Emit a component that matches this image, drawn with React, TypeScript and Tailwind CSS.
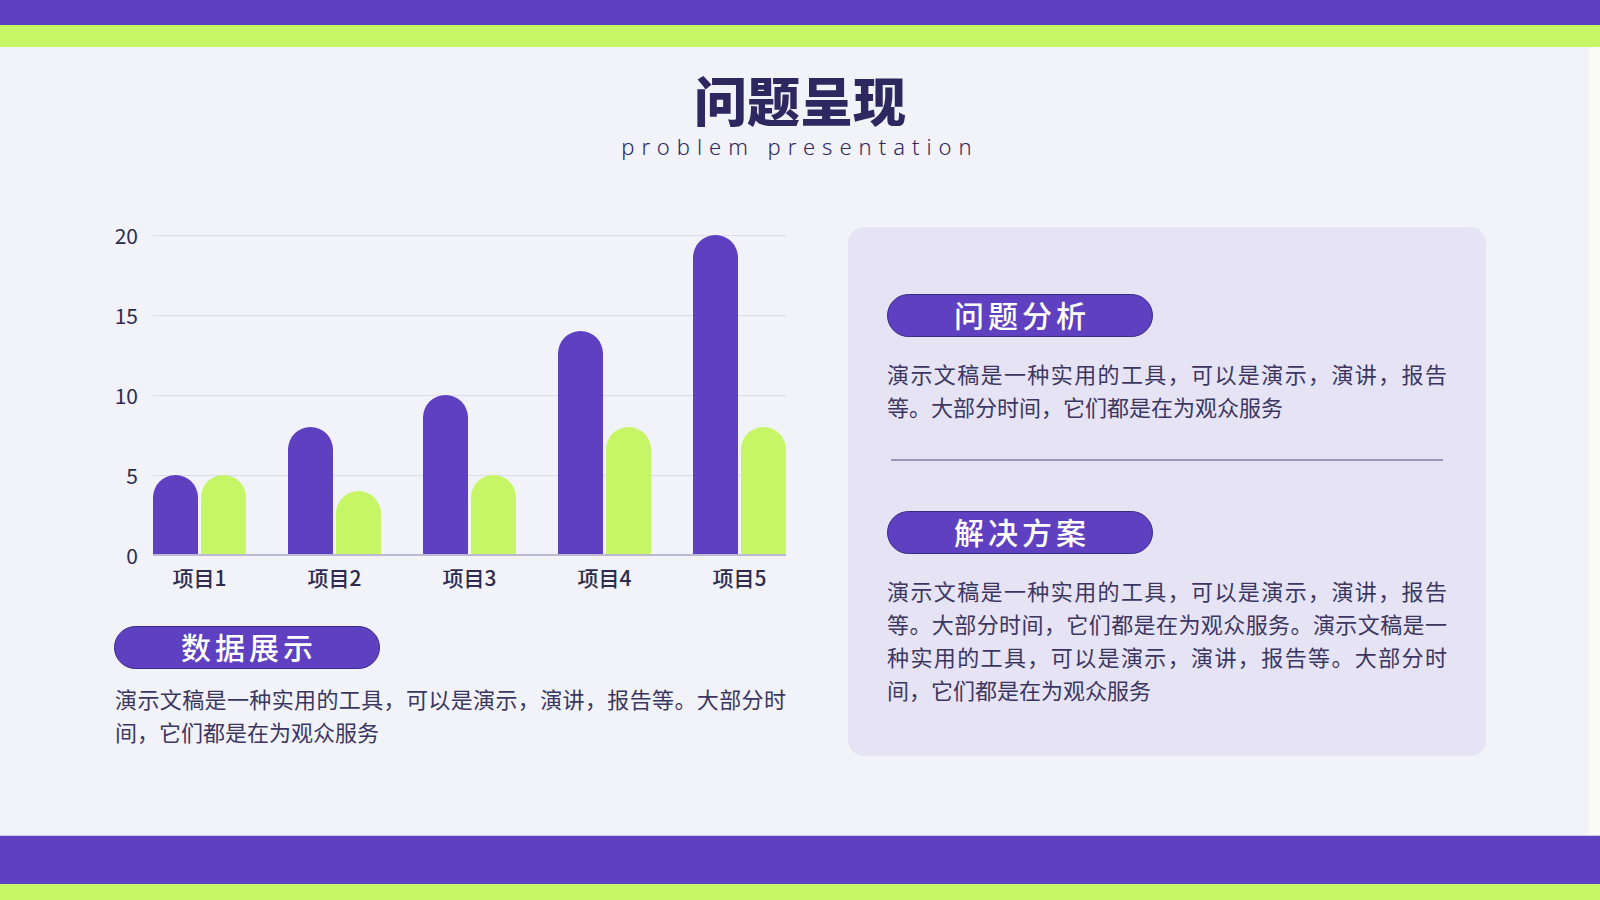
const data = [
  { name: '项目1', a: 5, b: 5 },
  { name: '项目2', a: 8, b: 4 },
  { name: '项目3', a: 10, b: 5 },
  { name: '项目4', a: 14, b: 8 },
  { name: '项目5', a: 20, b: 8 },
];

const cjk = "font-['Noto_Sans_CJK_SC','Noto_Sans',sans-serif]";
const unit = 16; // px per value unit

function Pill({ label }: { label: string }) {
  return (
    <div className="flex h-[43px] w-[266px] items-center justify-center rounded-full border border-[#3a2a8a] bg-[#5e40c1] pb-[3px] pl-[4px] text-[30px] font-medium leading-none tracking-[4px] text-white">
      {label}
    </div>
  );
}

const copy = '演示文稿是一种实用的工具，可以是演示，演讲，报告等。大部分时间，它们都是在为观众服务';

export default function App() {
  return (
    <div className={`flex h-[900px] w-[1600px] flex-col overflow-hidden bg-[#f1f3f8] ${cjk}`}>
      {/* top bands */}
      <div className="h-[25px] bg-[#5e40c1]" />
      <div className="h-[22px] bg-[#c6f566]" />

      <main className="flex flex-1 flex-col border-r-[11px] border-[#fbfaf4]">
        {/* title */}
        <div className="flex flex-col items-center pt-[26px] pl-[11px]">
          <h1 className="text-[53px] font-black leading-none text-[#2e2760]">问题呈现</h1>
          <p className="mt-[9px] font-['Noto_Sans',sans-serif] text-[22px] font-light leading-none tracking-[7px] text-[#2e2760]">
            problem presentation
          </p>
        </div>

        <div className="mt-[66px] flex items-start pl-[112px]">
          {/* left column */}
          <div className="flex w-[675px] flex-col">
            <div className="flex gap-[15px]">
              <div className="flex h-[344px] w-[26px] flex-col justify-between text-right text-[21px] leading-[24px] text-[#2e2b4f]">
                <span>20</span>
                <span>15</span>
                <span>10</span>
                <span>5</span>
                <span>0</span>
              </div>
              <div className="mt-[12px] flex flex-col">
                <div className="relative h-[320px] w-[633px]">
                  <div className="absolute left-0 right-0 top-0 h-px bg-[#dddbe9]" />
                  <div className="absolute left-0 right-0 top-[80px] h-px bg-[#dddbe9]" />
                  <div className="absolute left-0 right-0 top-[160px] h-px bg-[#dddbe9]" />
                  <div className="absolute left-0 right-0 top-[240px] h-px bg-[#dddbe9]" />
                  <div className="relative flex h-full items-end gap-[42px]">
                    {data.map((d) => (
                      <div key={d.name} className="flex items-end gap-[3px]">
                        <div className="w-[45px] rounded-t-full bg-[#5e40c1]" style={{ height: d.a * unit }} />
                        <div className="w-[45px] rounded-t-full bg-[#c6f566]" style={{ height: d.b * unit }} />
                      </div>
                    ))}
                  </div>
                  <div className="absolute bottom-[-1px] left-0 right-0 h-[2px] bg-[#bdb9d3]" />
                </div>
                <div className="mt-[10px] flex gap-[42px]">
                  {data.map((d) => (
                    <div key={d.name} className="w-[93px] text-center text-[21px] font-medium leading-[24px] text-[#2e2b4f]">
                      {d.name}
                    </div>
                  ))}
                </div>
              </div>
            </div>

            <div className="mt-[37px] pl-[2px]">
              <Pill label="数据展示" />
            </div>
            <p className="mt-[13px] w-[674px] pl-[3px] text-justify text-[22px] leading-[33px] text-[#3b3762]">
              {copy}
            </p>
          </div>

          {/* right panel */}
          <div className="ml-[61px] mt-[4px] flex h-[529px] w-[638px] flex-col rounded-[16px] bg-[#e6e3f4] px-[39px] pt-[67px]">
            <Pill label="问题分析" />
            <p className="mt-[20px] text-justify text-[22px] leading-[33px] text-[#3b3762]">{copy}</p>
            <div className="mx-[4px] mt-[36px] h-[2px] bg-[#9a96b6]" />
            <div className="mt-[50px]">
              <Pill label="解决方案" />
            </div>
            <p className="mt-[20px] text-justify text-[22px] leading-[33px] text-[#3b3762]">
              {copy}。{copy}
            </p>
          </div>
        </div>
      </main>

      {/* bottom bands */}
      <div className="h-px bg-[#cfc8ee]" />
      <div className="h-[48px] bg-[#5e40c1]" />
      <div className="h-[16px] bg-[#c6f566]" />
    </div>
  );
}
